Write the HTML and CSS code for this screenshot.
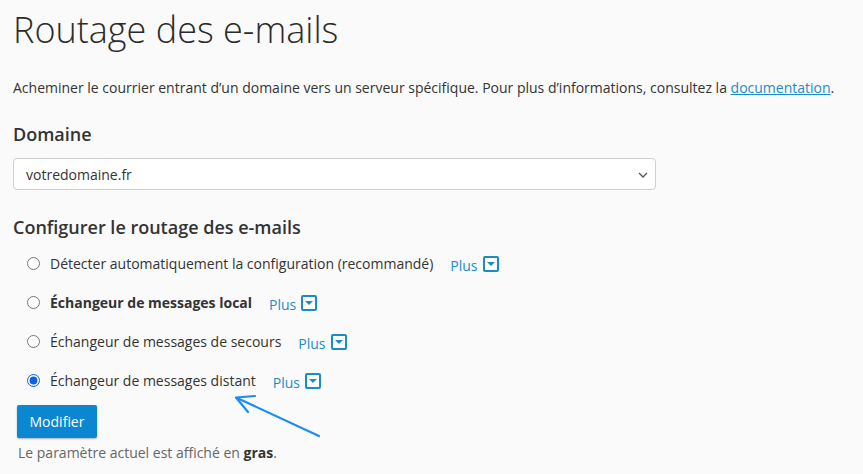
FILE: index.html
```html
<!DOCTYPE html>
<html>
<head>
    <title>Routage des e-mails</title>
    <link rel="stylesheet" href="styles.css">
</head>
<body>
    <div class="page">
        <h1>Routage des e-mails</h1>
        <p class="intro">Acheminer le courrier entrant d’un domaine vers un serveur spécifique. Pour plus d’informations, consultez la <a href="#">documentation</a>.</p>

        <h2>Domaine</h2>
        <div class="select-wrap">
            <select class="domain-select">
                <option>votredomaine.fr</option>
            </select>
            <svg class="select-arrow" width="10" height="6" viewBox="0 0 10 6"><path d="M1 1l4 4 4-4" fill="none" stroke="#555" stroke-width="1.3"/></svg>
        </div>

        <h2>Configurer le routage des e-mails</h2>
        <form class="routing">
            <div class="option">
                <input type="radio" name="mx" id="auto">
                <label for="auto">Détecter automatiquement la configuration (recommandé)</label>
                <a href="#" class="more">Plus <span class="more-icon"></span></a>
            </div>
            <div class="option">
                <input type="radio" name="mx" id="local">
                <label for="local" class="current">Échangeur de messages local</label>
                <a href="#" class="more">Plus <span class="more-icon"></span></a>
            </div>
            <div class="option">
                <input type="radio" name="mx" id="backup">
                <label for="backup">Échangeur de messages de secours</label>
                <a href="#" class="more">Plus <span class="more-icon"></span></a>
            </div>
            <div class="option">
                <input type="radio" name="mx" id="remote" checked>
                <label for="remote">Échangeur de messages distant</label>
                <a href="#" class="more">Plus <span class="more-icon"></span></a>
            </div>
            <button type="button" class="btn">Modifier</button>
            <p class="note">Le paramètre actuel est affiché en <b>gras</b>.</p>
        </form>

        <svg class="annotation" width="100" height="50" viewBox="0 0 100 50">
            <path d="M93 46 L11 8" stroke="#1a8cf5" stroke-width="2.2" fill="none" stroke-linecap="round"/>
            <path d="M29 6 L10 7.5 L22 22" stroke="#1a8cf5" stroke-width="2.2" fill="none" stroke-linecap="round" stroke-linejoin="round"/>
        </svg>
    </div>
</body>
</html>
```
FILE: styles.css
```css
body {
    margin: 0;
    background-color: #fafafa;
    font-family: "Open Sans", sans-serif;
    color: #333;
}

.page {
    position: relative;
    padding: 0 13px;
}

h1 {
    margin: 0;
    padding-top: 4px;
    font-size: 36px;
    font-weight: 300;
    line-height: 52px;
    color: #2b2b2b;
}

.intro {
    margin: 22px 0 0;
    font-size: 14px;
    line-height: 20px;
}

.intro a {
    color: #1a8dc8;
}

h2 {
    margin: 0;
    font-size: 18px;
    font-weight: 600;
    line-height: 24px;
    color: #333;
}

.intro + h2 {
    margin-top: 24px;
}

.select-wrap {
    position: relative;
    width: 643px;
    margin-top: 12px;
}

.domain-select {
    display: block;
    width: 100%;
    height: 32px;
    padding: 0 12px;
    appearance: none;
    background: #fff;
    border: 1px solid #cfcfcf;
    border-radius: 4px;
    font-family: inherit;
    font-size: 14px;
    color: #333;
}

.select-arrow {
    position: absolute;
    right: 8px;
    top: 14px;
}

.select-wrap + h2 {
    margin-top: 25px;
}

.routing {
    margin-top: 5px;
}

.option {
    display: flex;
    align-items: center;
    height: 39px;
    padding-left: 14px;
    font-size: 14px;
}

.option input {
    width: 13px;
    height: 13px;
    margin: 0 10px 0 0;
    accent-color: #0b63e5;
}

.option label.current {
    font-weight: 700;
}

.more {
    display: inline-flex;
    align-items: center;
    margin-left: 17px;
    margin-top: 4px;
    color: #1a8dc8;
    text-decoration: none;
}

.more-icon {
    position: relative;
    box-sizing: border-box;
    width: 16px;
    height: 16px;
    margin-left: 5px;
    margin-top: -3px;
    border: 2px solid #1a8dc8;
    border-radius: 2px;
    background: #fff;
}

.more-icon::after {
    content: "";
    position: absolute;
    left: 2px;
    top: 4px;
    border-left: 4px solid transparent;
    border-right: 4px solid transparent;
    border-top: 4px solid #1a8dc8;
}

.btn {
    display: block;
    margin: 5px 0 0 4px;
    width: 80px;
    height: 33px;
    background-color: #0b86d1;
    color: #fff;
    border: none;
    border-radius: 2px;
    box-shadow: 0 1px 2px rgba(0, 0, 0, 0.3);
    font-family: inherit;
    font-size: 14px;
}

.note {
    margin: 5px 0 0 5px;
    font-size: 14px;
    line-height: 20px;
    color: #666;
}

.note b {
    color: #333;
}

.annotation {
    position: absolute;
    left: 226px;
    top: 390px;
}
```
